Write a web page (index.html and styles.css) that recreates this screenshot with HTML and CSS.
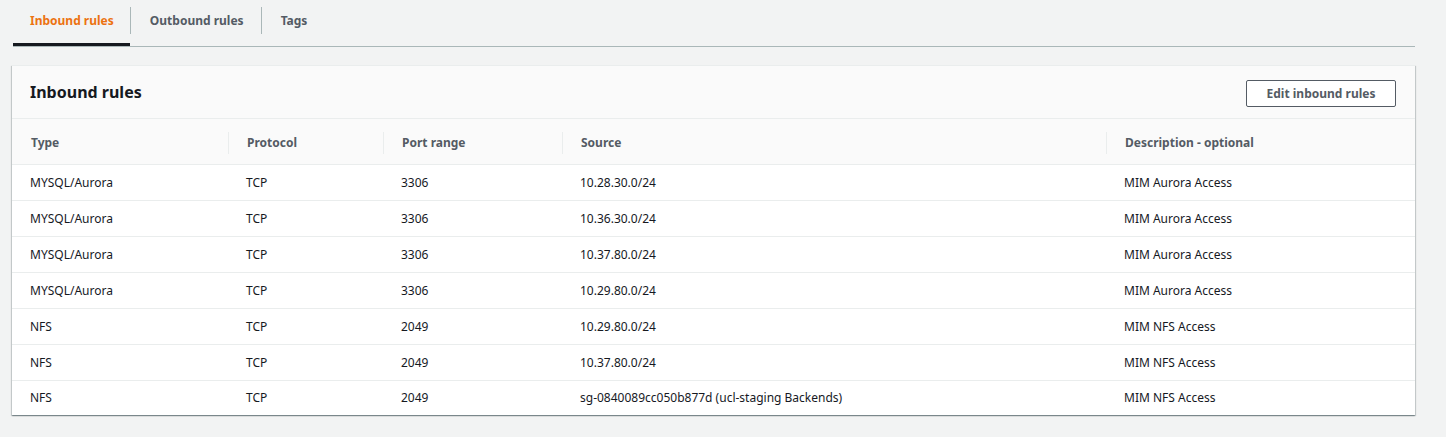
FILE: index.html
```html
<!DOCTYPE html>
<html>
<head>
<meta charset="utf-8">
<link rel="stylesheet" href="styles.css">
</head>
<body>
<div class="page">
  <div class="tabs">
    <div class="tab active">Inbound rules</div>
    <div class="tab">Outbound rules</div>
    <div class="tab">Tags</div>
  </div>
  <div class="card">
    <div class="card-header">
      <h2 class="title">Inbound rules</h2>
      <button class="btn">Edit inbound rules</button>
    </div>
    <table class="rules">
      <colgroup>
        <col class="c1"><col class="c2"><col class="c3"><col class="c4"><col class="c5">
      </colgroup>
      <thead>
        <tr><th><span>Type</span></th><th><span>Protocol</span></th><th><span>Port range</span></th><th><span>Source</span></th><th><span>Description - optional</span></th></tr>
      </thead>
      <tbody>
        <tr><td>MYSQL/Aurora</td><td>TCP</td><td>3306</td><td>10.28.30.0/24</td><td>MIM Aurora Access</td></tr>
        <tr><td>MYSQL/Aurora</td><td>TCP</td><td>3306</td><td>10.36.30.0/24</td><td>MIM Aurora Access</td></tr>
        <tr><td>MYSQL/Aurora</td><td>TCP</td><td>3306</td><td>10.37.80.0/24</td><td>MIM Aurora Access</td></tr>
        <tr><td>MYSQL/Aurora</td><td>TCP</td><td>3306</td><td>10.29.80.0/24</td><td>MIM Aurora Access</td></tr>
        <tr><td>NFS</td><td>TCP</td><td>2049</td><td>10.29.80.0/24</td><td>MIM NFS Access</td></tr>
        <tr><td>NFS</td><td>TCP</td><td>2049</td><td>10.37.80.0/24</td><td>MIM NFS Access</td></tr>
        <tr><td>NFS</td><td>TCP</td><td>2049</td><td>sg-0840089cc050b877d (ucl-staging Backends)</td><td>MIM NFS Access</td></tr>
      </tbody>
    </table>
  </div>
</div>
</body>
</html>
```
FILE: styles.css
```css
* { box-sizing: border-box; }
html, body { margin: 0; padding: 0; background: #f2f3f3; }
body {
  font-family: "Noto Sans", "Liberation Sans", sans-serif;
  font-size: 12px;
  color: #16191f;
  width: 1446px;
  height: 437px;
  overflow: hidden;
}
.page { padding: 0 31px 0 12px; }
.tabs {
  display: flex;
  margin-left: 1px;
  border-bottom: 1px solid #aab7b8;
  height: 47px;
}
.tab {
  position: relative;
  height: 46px;
  padding: 0 17px 5px 17px;
  display: flex;
  align-items: center;
  font-weight: 700;
  color: #545b64;
}
.tab + .tab { padding-left: 20px; }
.tab + .tab::before {
  content: "";
  position: absolute;
  left: 0;
  top: 7px;
  height: 27px;
  width: 1px;
  background: #aab7b8;
}
.tab.active {
  color: #ec7211;
  border-bottom: 3px solid #16191f;
  padding: 0 16px 2px 17px;
}
.card {
  margin-top: 18px;
  background: #fff;
  box-shadow: 0 1px 1px 0 rgba(0,28,36,.3), 1px 1px 1px 0 rgba(0,28,36,.15), -1px 1px 1px 0 rgba(0,28,36,.15);
  border-top: 1px solid #eaeded;
}
.card-header {
  background: #fafafa;
  height: 53px;
  display: flex;
  align-items: center;
  justify-content: space-between;
  padding: 0 19px 0 18px;
  border-bottom: 1px solid #eaeded;
}
.title { margin: 0 0 1px; font-size: 16px; font-weight: 700; color: #16191f; }
.btn {
  font-family: inherit;
  font-size: 12px;
  font-weight: 700;
  color: #545b64;
  background: #fff;
  border: 1px solid #545b64;
  border-radius: 2px;
  height: 27px;
  width: 150px;
  padding: 0;
  margin-top: 2px;
}
.rules { width: 100%; border-collapse: collapse; table-layout: fixed; }
.c1 { width: 216px; } .c2 { width: 155px; } .c3 { width: 179px; } .c4 { width: 544px; } .c5 { width: auto; }
th {
  background: #fafafa;
  height: 45px;
  text-align: left;
  font-weight: 700;
  color: #545b64;
  padding: 3px 0 0;
  border-bottom: 1px solid #eaeded;
}
th span {
  display: block;
  padding-left: 18px;
  line-height: 22px;
  border-left: 1px solid #eaeded;
}
th:first-child span { border-left: none; padding-left: 19px; }
td {
  height: 36px;
  padding: 0 0 0 18px;
  border-bottom: 1px solid #eaeded;
  white-space: nowrap;
}
td:first-child { padding-left: 18px; }
tbody tr:last-child td { border-bottom: none; height: 35px; }
```
